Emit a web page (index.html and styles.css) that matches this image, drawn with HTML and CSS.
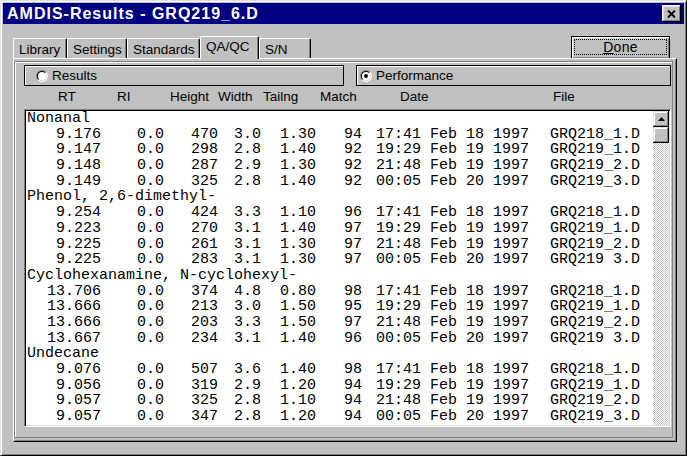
FILE: index.html
```html
<!DOCTYPE html>
<html>
<head>
<meta charset="utf-8">
<title>AMDIS-Results - GRQ219_6.D</title>
<link rel="stylesheet" href="styles.css">
</head>
<body>
<div class="window">
  <div class="titlebar">
    <span class="title">AMDIS-Results - GRQ219_6.D</span>
    <span class="close"><svg width="9" height="8" viewBox="0 0 9 8"><path d="M1 0.5L8 7.5M8 0.5L1 7.5" stroke="#000" stroke-width="2"/></svg></span>
  </div>
  <div class="toprow">
    <div class="tabs">
      <div class="tab w-lib">Library</div>
      <div class="tab w-set">Settings</div>
      <div class="tab w-std">Standards</div>
      <div class="tab sel w-qa">QA/QC</div>
      <div class="tab w-sn">S/N</div>
    </div>
    <div class="done"><span class="focus"><u>D</u>one</span></div>
  </div>
  <div class="panel">
    <div class="frame">
      <div class="radios">
        <div class="rbox rbox-results"><span class="radio"><span class="radio-in"></span></span>Results</div>
        <div class="rbox rbox-perf"><span class="radio on"><span class="radio-in"></span></span>Performance</div>
      </div>
      <div class="colhead">
        <span class="h-rt">RT</span><span class="h-ri">RI</span><span class="h-ht">Height</span><span class="h-wd">Width</span><span class="h-tl">Tailng</span><span class="h-mt">Match</span><span class="h-dt">Date</span><span>File</span>
      </div>
      <div class="list">
        <div class="rows">
          <div class="name">Nonanal</div>
          <div class="row"><span>9.176</span><span>0.0</span><span>470</span><span>3.0</span><span>1.30</span><span>94</span><span class="d">17:41 Feb 18 1997</span><span class="f">GRQ218_1.D</span></div>
          <div class="row"><span>9.147</span><span>0.0</span><span>298</span><span>2.8</span><span>1.40</span><span>92</span><span class="d">19:29 Feb 19 1997</span><span class="f">GRQ219_1.D</span></div>
          <div class="row"><span>9.148</span><span>0.0</span><span>287</span><span>2.9</span><span>1.30</span><span>92</span><span class="d">21:48 Feb 19 1997</span><span class="f">GRQ219_2.D</span></div>
          <div class="row"><span>9.149</span><span>0.0</span><span>325</span><span>2.8</span><span>1.40</span><span>92</span><span class="d">00:05 Feb 20 1997</span><span class="f">GRQ219_3.D</span></div>
          <div class="name">Phenol, 2,6-dimethyl-</div>
          <div class="row"><span>9.254</span><span>0.0</span><span>424</span><span>3.3</span><span>1.10</span><span>96</span><span class="d">17:41 Feb 18 1997</span><span class="f">GRQ218_1.D</span></div>
          <div class="row"><span>9.223</span><span>0.0</span><span>270</span><span>3.1</span><span>1.40</span><span>97</span><span class="d">19:29 Feb 19 1997</span><span class="f">GRQ219_1.D</span></div>
          <div class="row"><span>9.225</span><span>0.0</span><span>261</span><span>3.1</span><span>1.30</span><span>97</span><span class="d">21:48 Feb 19 1997</span><span class="f">GRQ219_2.D</span></div>
          <div class="row"><span>9.225</span><span>0.0</span><span>283</span><span>3.1</span><span>1.30</span><span>97</span><span class="d">00:05 Feb 20 1997</span><span class="f">GRQ219 3.D</span></div>
          <div class="name">Cyclohexanamine, N-cyclohexyl-</div>
          <div class="row"><span>13.706</span><span>0.0</span><span>374</span><span>4.8</span><span>0.80</span><span>98</span><span class="d">17:41 Feb 18 1997</span><span class="f">GRQ218_1.D</span></div>
          <div class="row"><span>13.666</span><span>0.0</span><span>213</span><span>3.0</span><span>1.50</span><span>95</span><span class="d">19:29 Feb 19 1997</span><span class="f">GRQ219_1.D</span></div>
          <div class="row"><span>13.666</span><span>0.0</span><span>203</span><span>3.3</span><span>1.50</span><span>97</span><span class="d">21:48 Feb 19 1997</span><span class="f">GRQ219_2.D</span></div>
          <div class="row"><span>13.667</span><span>0.0</span><span>234</span><span>3.1</span><span>1.40</span><span>96</span><span class="d">00:05 Feb 20 1997</span><span class="f">GRQ219 3.D</span></div>
          <div class="name">Undecane</div>
          <div class="row"><span>9.076</span><span>0.0</span><span>507</span><span>3.6</span><span>1.40</span><span>98</span><span class="d">17:41 Feb 18 1997</span><span class="f">GRQ218_1.D</span></div>
          <div class="row"><span>9.056</span><span>0.0</span><span>319</span><span>2.9</span><span>1.20</span><span>94</span><span class="d">19:29 Feb 19 1997</span><span class="f">GRQ219_1.D</span></div>
          <div class="row"><span>9.057</span><span>0.0</span><span>325</span><span>2.8</span><span>1.10</span><span>94</span><span class="d">21:48 Feb 19 1997</span><span class="f">GRQ219_2.D</span></div>
          <div class="row"><span>9.057</span><span>0.0</span><span>347</span><span>2.8</span><span>1.20</span><span>94</span><span class="d">00:05 Feb 20 1997</span><span class="f">GRQ219_3.D</span></div>
        </div>
        <div class="scrollbar">
          <div class="sb-btn"><svg width="7" height="4" viewBox="0 0 7 4"><path d="M3.5 0L7 4H0Z" fill="#000"/></svg></div>
          <div class="sb-thumb"></div>
          <div class="sb-track"></div>
        </div>
      </div>
    </div>
  </div>
</div>
</body>
</html>
```
FILE: styles.css
```css
* { box-sizing: border-box; }
body {
  margin: 0;
  background: #c0c0c0;
  font-family: "Liberation Sans", Arial, sans-serif;
  font-size: 13px;
  color: #000;
}
.window {
  width: 687px;
  height: 456px;
  background: #c0c0c0;
  border: 1px solid;
  border-color: #dfdfdf #000 #000 #dfdfdf;
  box-shadow: inset 1px 1px #fff, inset -1px -1px #808080;
  padding: 2px;
  display: flex;
  flex-direction: column;
}
.titlebar {
  height: 21px;
  flex: none;
  background: #000080;
  color: #fff;
  display: flex;
  align-items: center;
  justify-content: space-between;
  padding: 0 3px 0 4px;
}
.title {
  font-weight: bold;
  font-size: 16px;
  letter-spacing: 1px;
}
.close {
  width: 19px;
  height: 17px;
  background: #c0c0c0;
  box-shadow: inset -1px -1px #000, inset 1px 1px #fff, inset -2px -2px #808080, inset 2px 2px #dfdfdf;
  display: flex;
  align-items: center;
  justify-content: center;
}
.toprow {
  flex: none;
  height: 22px;
  margin-top: 12px;
  padding: 0 14px 0 10px;
  display: flex;
  justify-content: space-between;
  align-items: flex-start;
}
.tabs {
  display: flex;
  align-items: flex-end;
  height: 22px;
}
.tab {
  height: 20px;
  padding: 2px 0 0 5px;
  line-height: 17px;
  font-size: 13.5px;
  border-left: 1px solid #fff;
  border-top: 1px solid #fff;
  border-right: 1px solid #000;
  border-radius: 2px 2px 0 0;
  box-shadow: inset -1px 0 #808080;
  background: #c0c0c0;
  white-space: nowrap;
}
.w-lib { width: 54px; }
.w-set { width: 60px; }
.w-std { width: 73px; }
.w-qa { width: 59px; }
.w-sn { width: 52px; }
.tab.sel {
  height: 23px;
  margin-bottom: -1px;
  padding-top: 1px;
  position: relative;
  z-index: 1;
}
.done {
  width: 99px;
  height: 23px;
  border: 1px solid #000;
  background: #c0c0c0;
  box-shadow: inset 1px 1px #fff, inset -1px -1px #808080, inset 2px 2px #dfdfdf;
  display: flex;
  padding: 2px 2px 3px 2px;
}
.focus {
  flex: 1;
  border: 1px dotted #000;
  display: flex;
  align-items: center;
  justify-content: center;
  font-size: 14px;
  letter-spacing: 0.3px;
}
.panel {
  flex: none;
  margin-left: 10px;
  width: 664px;
  height: 384px;
  background: #c0c0c0;
  border-top: 1px solid #fff;
  border-left: 1px solid #fff;
  border-right: 1px solid #000;
  border-bottom: 1px solid #000;
  box-shadow: inset -1px -1px #808080;
  padding: 2px 3px 3px 0;
  display: flex;
}
.frame {
  flex: 1;
  border: 1px solid #808080;
  box-shadow: inset 1px 1px #fff;
  padding: 3px 1px 0 9px;
  display: flex;
  flex-direction: column;
}
.radios {
  display: grid;
  grid-template-columns: 320px 1fr;
  column-gap: 12px;
  height: 21px;
  font-size: 13.5px;
}
.rbox {
  border: 1px solid #000;
  box-shadow: inset 1px 1px #fff;
  display: flex;
  align-items: center;
}
.rbox-results { padding-left: 11px; }
.rbox-perf { padding-left: 3px; }
.radio {
  width: 12px;
  height: 12px;
  flex: none;
  margin-right: 4px;
  border-radius: 50%;
  border: 1px solid;
  border-color: #808080 #fff #fff #808080;
  display: flex;
  align-items: center;
  justify-content: center;
}
.radio-in {
  width: 10px;
  height: 10px;
  border-radius: 50%;
  border: 1px solid;
  border-color: #000 #dfdfdf #dfdfdf #000;
  background: #fff;
  display: flex;
  align-items: center;
  justify-content: center;
}
.radio.on .radio-in::after {
  content: "";
  width: 4px;
  height: 4px;
  border-radius: 50%;
  background: #000;
}
.colhead {
  height: 23px;
  line-height: 21px;
  padding-left: 34px;
  display: flex;
  white-space: nowrap;
  font-size: 13.5px;
}
.h-rt { width: 59px; }
.h-ri { width: 53px; }
.h-ht { width: 48px; }
.h-wd { width: 45px; }
.h-tl { width: 57px; }
.h-mt { width: 80px; }
.h-dt { width: 153px; }
.list {
  height: 318px;
  background: #fff;
  border: 1px solid;
  border-color: #808080 #fff #fff #808080;
  box-shadow: inset 1px 1px #000, inset -1px -1px #dfdfdf;
  padding: 1px;
  display: flex;
}
.rows {
  flex: 1;
  overflow: hidden;
  padding-left: 1px;
  font-family: "Liberation Mono", "Courier New", monospace;
  font-size: 15px;
  line-height: 15.7px;
  white-space: nowrap;
}
.row {
  display: grid;
  grid-template-columns: 74px 63px 54px 43px 55px 46px 188px auto;
  height: 15.7px;
}
.row span { text-align: right; }
.row span.d { text-align: left; padding-left: 14px; }
.row span.f { text-align: left; }
.name { height: 15.7px; }
.scrollbar {
  width: 16px;
  flex: none;
  display: flex;
  flex-direction: column;
}
.sb-btn, .sb-thumb {
  height: 16px;
  flex: none;
  background: #c0c0c0;
  box-shadow: inset -1px -1px #000, inset 1px 1px #dfdfdf, inset -2px -2px #808080, inset 2px 2px #fff;
  display: flex;
  align-items: center;
  justify-content: center;
}
.sb-btn svg { margin-top: -1px; }
.sb-track {
  flex: 1;
  background-image: repeating-conic-gradient(#fff 0 25%, #c0c0c0 0 50%);
  background-size: 2px 2px;
}
```
